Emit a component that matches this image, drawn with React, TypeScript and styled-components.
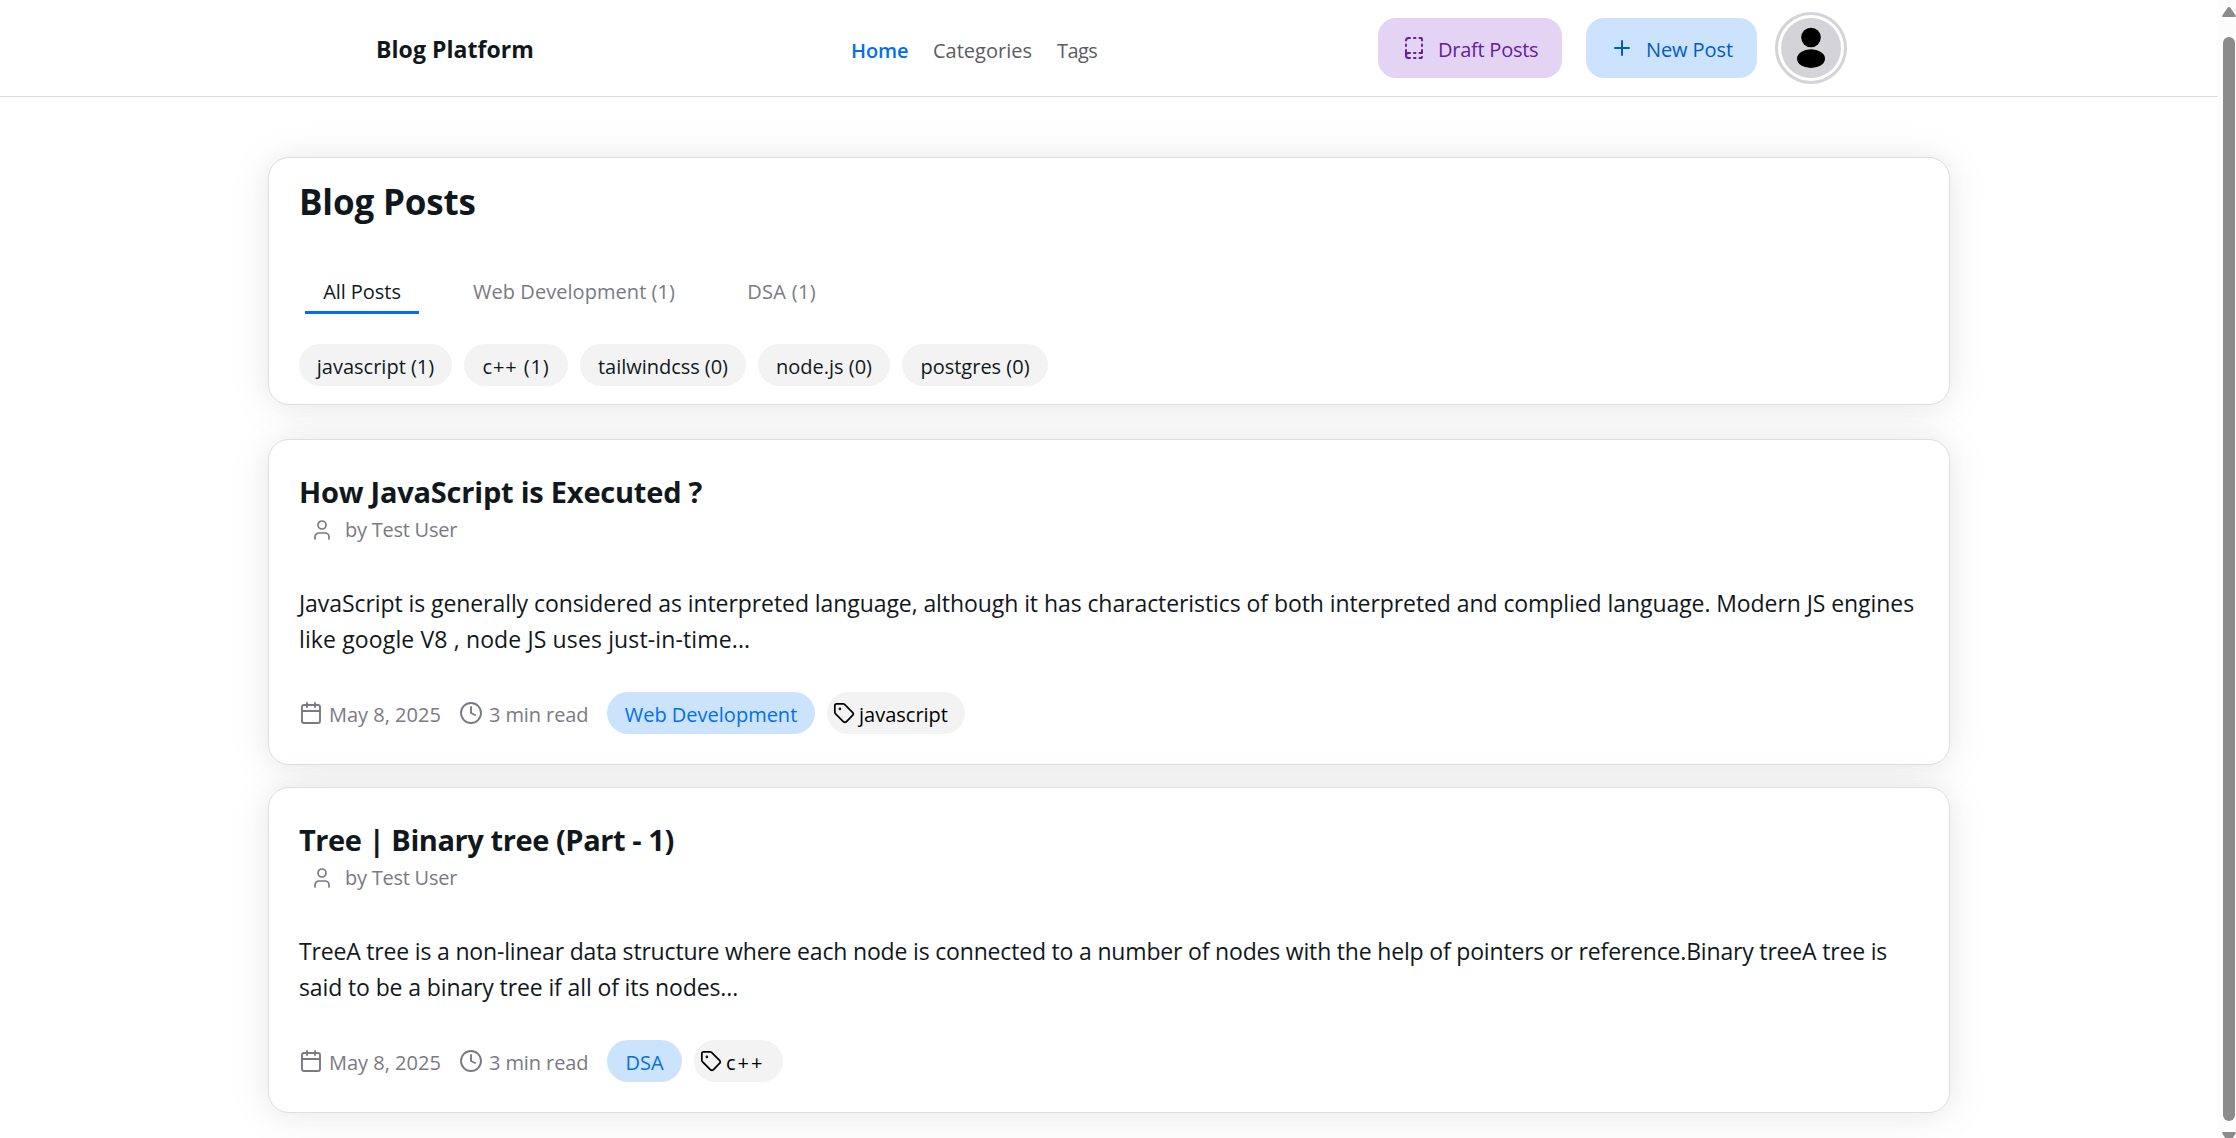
import React from "react";
import styled, { createGlobalStyle } from "styled-components";
import { BookDashed, Calendar, Clock, Plus, Tag, User } from "lucide-react";

const GlobalStyle = createGlobalStyle`
  *, *::before, *::after { box-sizing: border-box; }
  body {
    margin: 0;
    background: #fff;
    color: #11181c;
    font-family: "Open Sans", "Noto Sans", sans-serif;
    font-size: 20px;
  }
  h1, h2, p { margin: 0; }
  button { font: inherit; border: 0; background: none; padding: 0; color: inherit; }
  a { color: inherit; text-decoration: none; }
  svg { display: block; flex: none; }
`;

const Screen = styled.div`
  display: flex;
  height: 1138px;
  overflow: hidden;
`;

const Page = styled.div`
  flex: 1;
  min-width: 0;
  overflow: hidden;
`;

const Header = styled.header`
  height: 97px;
  padding: 0 371px 0 376px;
  display: grid;
  grid-template-columns: 475px 1fr auto;
  align-items: center;
  border-bottom: 1px solid #dcdcdc;
`;

const Brand = styled.a`
  font-size: 23px;
  font-weight: 700;
  line-height: 32px;
  padding-top: 2px;
  letter-spacing: 0.06px;
`;

const Nav = styled.nav`
  display: flex;
  gap: 24px;
  padding-top: 5px;
  line-height: 30px;
`;

const NavLink = styled.a<{ $active?: boolean; $width: number; $tracking?: number }>`
  width: ${(p) => p.$width}px;
  white-space: nowrap;
  color: ${(p) => (p.$active ? "#006fee" : "#5b5b63")};
  font-weight: ${(p) => (p.$active ? 600 : 400)};
  letter-spacing: ${(p) => p.$tracking ?? 0}px;
`;

const Actions = styled.div`
  display: flex;
  align-items: center;
`;

const ActionButton = styled.button<{ $tone: "violet" | "blue"; $width: number }>`
  width: ${(p) => p.$width}px;
  height: 60px;
  margin-right: ${(p) => (p.$tone === "violet" ? 24 : 18)}px;
  padding: 0 0 0 24px;
  display: flex;
  align-items: center;
  gap: 12px;
  border-radius: 18px;
  white-space: nowrap;
  background: ${(p) => (p.$tone === "violet" ? "#e4d4f4" : "#cce3fd")};
  color: ${(p) => (p.$tone === "violet" ? "#6020a0" : "#005bc4")};
`;

const Label = styled.span<{ $tracking?: number }>`
  line-height: 30px;
  padding-top: 3px;
  letter-spacing: ${(p) => p.$tracking ?? 0}px;
`;

const AvatarRing = styled.span`
  width: 72px;
  height: 72px;
  padding: 3px;
  border: 3px solid #d4d4d8;
  border-radius: 50%;
`;

const Avatar = styled.svg`
  width: 60px;
  height: 60px;
  border-radius: 50%;
  background: #d4d4d8;
`;

const Main = styled.main`
  width: 1682px;
  margin: 60px 0 0 268px;
`;

const Card = styled.section`
  background: #fff;
  border: 1px solid #dedede;
  border-radius: 21px;
  box-shadow: 0 0 22px rgba(0, 0, 0, 0.03), 0 3px 45px rgba(0, 0, 0, 0.08);
`;

const FilterCard = styled(Card)`
  height: 248px;
  padding: 17px 30px 18px;
  margin-bottom: 34px;
`;

const Title = styled.h1`
  font-size: 35px;
  font-weight: 700;
  line-height: 53px;
  letter-spacing: -0.15px;
`;

const Tabs = styled.div`
  display: flex;
  gap: 36px;
  margin-top: 41px;
  padding-left: 6px;
`;

const Tab = styled.button<{ $active?: boolean; $width: number; $tracking?: number }>`
  width: ${(p) => p.$width}px;
  height: 45px;
  white-space: nowrap;
  border-top: 3px solid transparent;
  border-bottom: 3px solid ${(p) => (p.$active ? "#006fee" : "transparent")};
  color: ${(p) => (p.$active ? "#11181c" : "#7a7a83")};
  letter-spacing: ${(p) => p.$tracking ?? 0}px;
`;

const ChipRow = styled.div`
  display: flex;
  gap: 12px;
  margin-top: 30px;
`;

const Chip = styled.span<{ $width: number; $primary?: boolean }>`
  width: ${(p) => p.$width}px;
  height: 42px;
  display: flex;
  align-items: center;
  justify-content: center;
  border-radius: 21px;
  white-space: nowrap;
  background: ${(p) => (p.$primary ? "#cce3fd" : "#f3f3f4")};
  color: ${(p) => (p.$primary ? "#006fee" : "#11181c")};
`;

const TagChip = styled(Chip)`
  justify-content: flex-start;
  gap: 4px;
  padding-left: 6px;
  color: #000;
`;

const PostCard = styled(Card)`
  height: 326px;
  padding: 30px;
  margin-bottom: 22px;
`;

const PostTitle = styled.h2<{ $tracking: number }>`
  font-size: 29px;
  font-weight: 700;
  line-height: 43px;
  letter-spacing: ${(p) => p.$tracking}px;
`;

const Byline = styled.div`
  height: 30px;
  padding-left: 11px;
  display: flex;
  align-items: center;
  gap: 11px;
  color: #7a7a83;
  letter-spacing: -0.2px;

  svg { margin-top: 4px; }
`;

const Excerpt = styled.p`
  margin-top: 42px;
  font-size: 23px;
  line-height: 36px;
`;

const ExcerptLine = styled.span<{ $tracking: number }>`
  display: block;
  white-space: nowrap;
  letter-spacing: ${(p) => p.$tracking}px;
`;

const MetaRow = styled.div`
  display: flex;
  align-items: center;
  gap: 12px;
  margin-top: 35px;
`;

const Meta = styled.span<{ $width: number; $gap: number }>`
  width: ${(p) => p.$width}px;
  margin-right: 6px;
  display: flex;
  align-items: center;
  gap: ${(p) => p.$gap}px;
  white-space: nowrap;
  color: #7a7a83;
`;

const Scrollbar = styled.div`
  width: 18px;
  padding-top: 7px;
  display: flex;
  flex-direction: column;
  align-items: flex-end;
  background: #fcfcfc;
`;

const Arrow = styled.svg`
  width: 14px;
  height: 10px;
  fill: #8b8b8b;
`;

const Thumb = styled.div`
  flex: none;
  width: 12px;
  height: 1084px;
  margin: 20px 1px 11px;
  border-radius: 6px;
  background: #8b8b8b;
`;

const filters = [
  { label: "javascript (1)", width: 153, tracking: 0 },
  { label: "c++ (1)", width: 104, tracking: 0.9 },
  { label: "tailwindcss (0)", width: 166, tracking: -0.03 },
  { label: "node.js (0)", width: 132, tracking: 0 },
  { label: "postgres (0)", width: 146, tracking: 0 },
];

const posts = [
  {
    title: "How JavaScript is Executed ?",
    titleTracking: -0.22,
    excerpt: [
      {
        text: "JavaScript is generally considered as interpreted language, although it has characteristics of both interpreted and complied language. Modern JS engines",
        tracking: -0.075,
      },
      { text: "like google V8 , node JS uses just-in-time...", tracking: 0.13 },
    ],
    category: "Web Development",
    categoryWidth: 208,
    tag: "javascript",
    tagWidth: 138,
    tagTracking: 0,
  },
  {
    title: "Tree | Binary tree (Part - 1)",
    titleTracking: -0.42,
    excerpt: [
      {
        text: "TreeA tree is a non-linear data structure where each node is connected to a number of nodes with the help of pointers or reference.Binary treeA tree is",
        tracking: -0.18,
      },
      { text: "said to be a binary tree if all of its nodes...", tracking: -0.12 },
    ],
    category: "DSA",
    categoryWidth: 75,
    tag: "c++",
    tagWidth: 89,
    tagTracking: 2,
  },
];

export default function App() {
  return (
    <Screen>
      <GlobalStyle />
      <Page>
        <Header>
          <Brand>Blog Platform</Brand>
          <Nav>
            <NavLink $active $width={58} $tracking={-0.1}>Home</NavLink>
            <NavLink $width={100} $tracking={0}>Categories</NavLink>
            <NavLink $width={42} $tracking={-0.6}>Tags</NavLink>
          </Nav>
          <Actions>
            <ActionButton $tone="violet" $width={184}>
              <BookDashed size={24} strokeWidth={2} />
              <Label $tracking={-0.25}>Draft Posts</Label>
            </ActionButton>
            <ActionButton $tone="blue" $width={171}>
              <Plus size={24} strokeWidth={2} />
              <Label $tracking={-0.1}>New Post</Label>
            </ActionButton>
            <AvatarRing>
              <Avatar viewBox="0 0 60 60">
                <circle cx="30" cy="19.5" r="9.8" />
                <ellipse cx="30" cy="40.7" rx="14" ry="9.4" />
              </Avatar>
            </AvatarRing>
          </Actions>
        </Header>
        <Main>
          <FilterCard>
            <Title>Blog Posts</Title>
            <Tabs>
              <Tab $active $width={114} $tracking={-0.05}>All Posts</Tab>
              <Tab $width={238} $tracking={0.05}>Web Development (1)</Tab>
              <Tab $width={105} $tracking={0.3}>DSA (1)</Tab>
            </Tabs>
            <ChipRow>
              {filters.map((f) => (
                <Chip key={f.label} $width={f.width}>
                  <Label $tracking={f.tracking}>{f.label}</Label>
                </Chip>
              ))}
            </ChipRow>
          </FilterCard>
          {posts.map((post) => (
            <PostCard key={post.title}>
              <PostTitle $tracking={post.titleTracking}>{post.title}</PostTitle>
              <Byline>
                <User size={24} strokeWidth={1.7} />
                <Label $tracking={-0.25}>by Test User</Label>
              </Byline>
              <Excerpt>
                {post.excerpt.map((line) => (
                  <ExcerptLine key={line.text} $tracking={line.tracking}>{line.text}</ExcerptLine>
                ))}
              </Excerpt>
              <MetaRow>
                <Meta $width={142} $gap={6}>
                  <Calendar size={24} strokeWidth={1.9} />
                  <Label>May 8, 2025</Label>
                </Meta>
                <Meta $width={130} $gap={6}>
                  <Clock size={24} strokeWidth={1.9} />
                  <Label $tracking={-0.1}>3 min read</Label>
                </Meta>
                <Chip $primary $width={post.categoryWidth}>
                  <Label>{post.category}</Label>
                </Chip>
                <TagChip $width={post.tagWidth}>
                  <Tag size={22} strokeWidth={1.9} />
                  <Label $tracking={post.tagTracking}>{post.tag}</Label>
                </TagChip>
              </MetaRow>
            </PostCard>
          ))}
        </Main>
      </Page>
      <Scrollbar>
        <Arrow viewBox="0 0 14 10">
          <path d="M7 0Q8 0 8.6 .9L13.7 8.4Q14.2 10 12.8 10H1.2Q-.2 10 .3 8.4L5.4 .9Q6 0 7 0Z" />
        </Arrow>
        <Thumb />
        <Arrow viewBox="0 0 14 10">
          <path d="M7 10Q8 10 8.6 9.1L13.7 1.6Q14.2 0 12.8 0H1.2Q-.2 0 .3 1.6L5.4 9.1Q6 10 7 10Z" />
        </Arrow>
      </Scrollbar>
    </Screen>
  );
}
